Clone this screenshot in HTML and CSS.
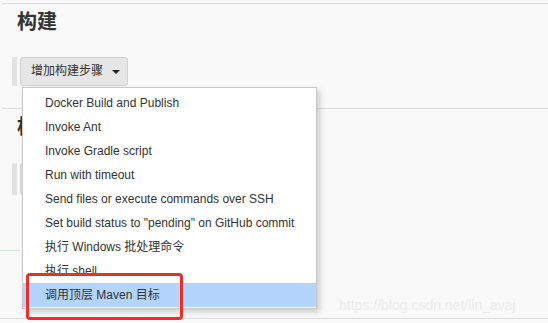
FILE: index.html
```html
<!DOCTYPE html>
<html>
<head>
<meta charset="utf-8">
<link rel="stylesheet" href="styles.css">
</head>
<body>
<div class="page">
  <div class="section">
    <h2 class="title">构建</h2>
    <div class="row">
      <div class="bar"></div>
      <div class="btn">增加构建步骤 <span class="caret"></span></div>
    </div>
  </div>
  <div class="section second">
    <h2 class="title">构</h2>
    <div class="row row2">
      <div class="bar tall"></div>
      <div class="btn blank"></div>
    </div>
  </div>
  <div class="green"></div>
  <div class="bottom"></div>

  <ul class="menu">
    <li>Docker Build and Publish</li>
    <li>Invoke Ant</li>
    <li>Invoke Gradle script</li>
    <li>Run with timeout</li>
    <li>Send files or execute commands over SSH</li>
    <li>Set build status to "pending" on GitHub commit</li>
    <li>执行 Windows 批处理命令</li>
    <li>执行 shell</li>
    <li class="active">调用顶层 Maven 目标</li>
  </ul>
  <div class="mark"></div>
  <div class="wm">https://blog.csdn.net/lin_avaj</div>
</div>
</body>
</html>
```
FILE: styles.css
```css
html, body {
  margin: 0;
  padding: 0;
  background: #f9f9f9;
  width: 548px;
  height: 323px;
  overflow: hidden;
  font-family: "Liberation Sans", "Noto Sans CJK SC", sans-serif;
  color: #333;
}
.page {
  position: relative;
  height: 323px;
  padding: 3px 0 0 2px;
  box-sizing: border-box;
}
.section {
  border-top: 1px solid #dcdcdc;
  height: 104px;
}
.second {
  height: 141px;
}
.title {
  margin: 0;
  padding: 6px 15px;
  font-size: 20px;
  line-height: 24px;
  font-weight: bold;
  color: #333;
}
.row {
  display: flex;
  align-items: stretch;
  gap: 3px;
  margin: 17px 0 0 10px;
  height: 29px;
}
.row2 {
  margin-top: 18px;
  height: 32px;
}
.bar {
  width: 5px;
  background: #e2e2e2;
}
.btn {
  box-sizing: border-box;
  width: 108px;
  border: 1px solid #d0d0d0;
  border-radius: 3px;
  background: #e6e6e6;
  font-size: 12px;
  line-height: 27px;
  padding-left: 10px;
  color: #333;
  white-space: nowrap;
}
.caret {
  display: inline-block;
  width: 0;
  height: 0;
  margin-left: 6px;
  vertical-align: middle;
  border-left: 4px solid transparent;
  border-right: 4px solid transparent;
  border-top: 4px solid #222;
}
.green {
  width: 20px;
  border-top: 1px solid #cde6d6;
  margin-left: -2px;
}
.bottom {
  position: absolute;
  left: 0;
  right: 0;
  top: 318px;
  border-top: 1px solid #dcdcdc;
}
.menu {
  position: absolute;
  left: 22px;
  top: 87px;
  width: 295px;
  box-sizing: border-box;
  margin: 0;
  padding: 3px 0 1px;
  list-style: none;
  background: #fff;
  border: 1px solid #c8c8c8;
  box-shadow: 3px 3px 6px rgba(0, 0, 0, 0.18);
  font-size: 12px;
}
.menu li {
  height: 24px;
  line-height: 24px;
  padding-left: 22px;
  color: #333;
  white-space: nowrap;
}
.menu li.active {
  background: #b3d4fc;
}
.mark {
  position: absolute;
  left: 26px;
  top: 273px;
  width: 157px;
  height: 47px;
  box-sizing: border-box;
  border: 3px solid #f42a2a;
  border-radius: 4px;
}
.wm {
  position: absolute;
  left: 339px;
  top: 296px;
  font-size: 14px;
  line-height: 18px;
  color: #ebebeb;
  white-space: nowrap;
}
```
